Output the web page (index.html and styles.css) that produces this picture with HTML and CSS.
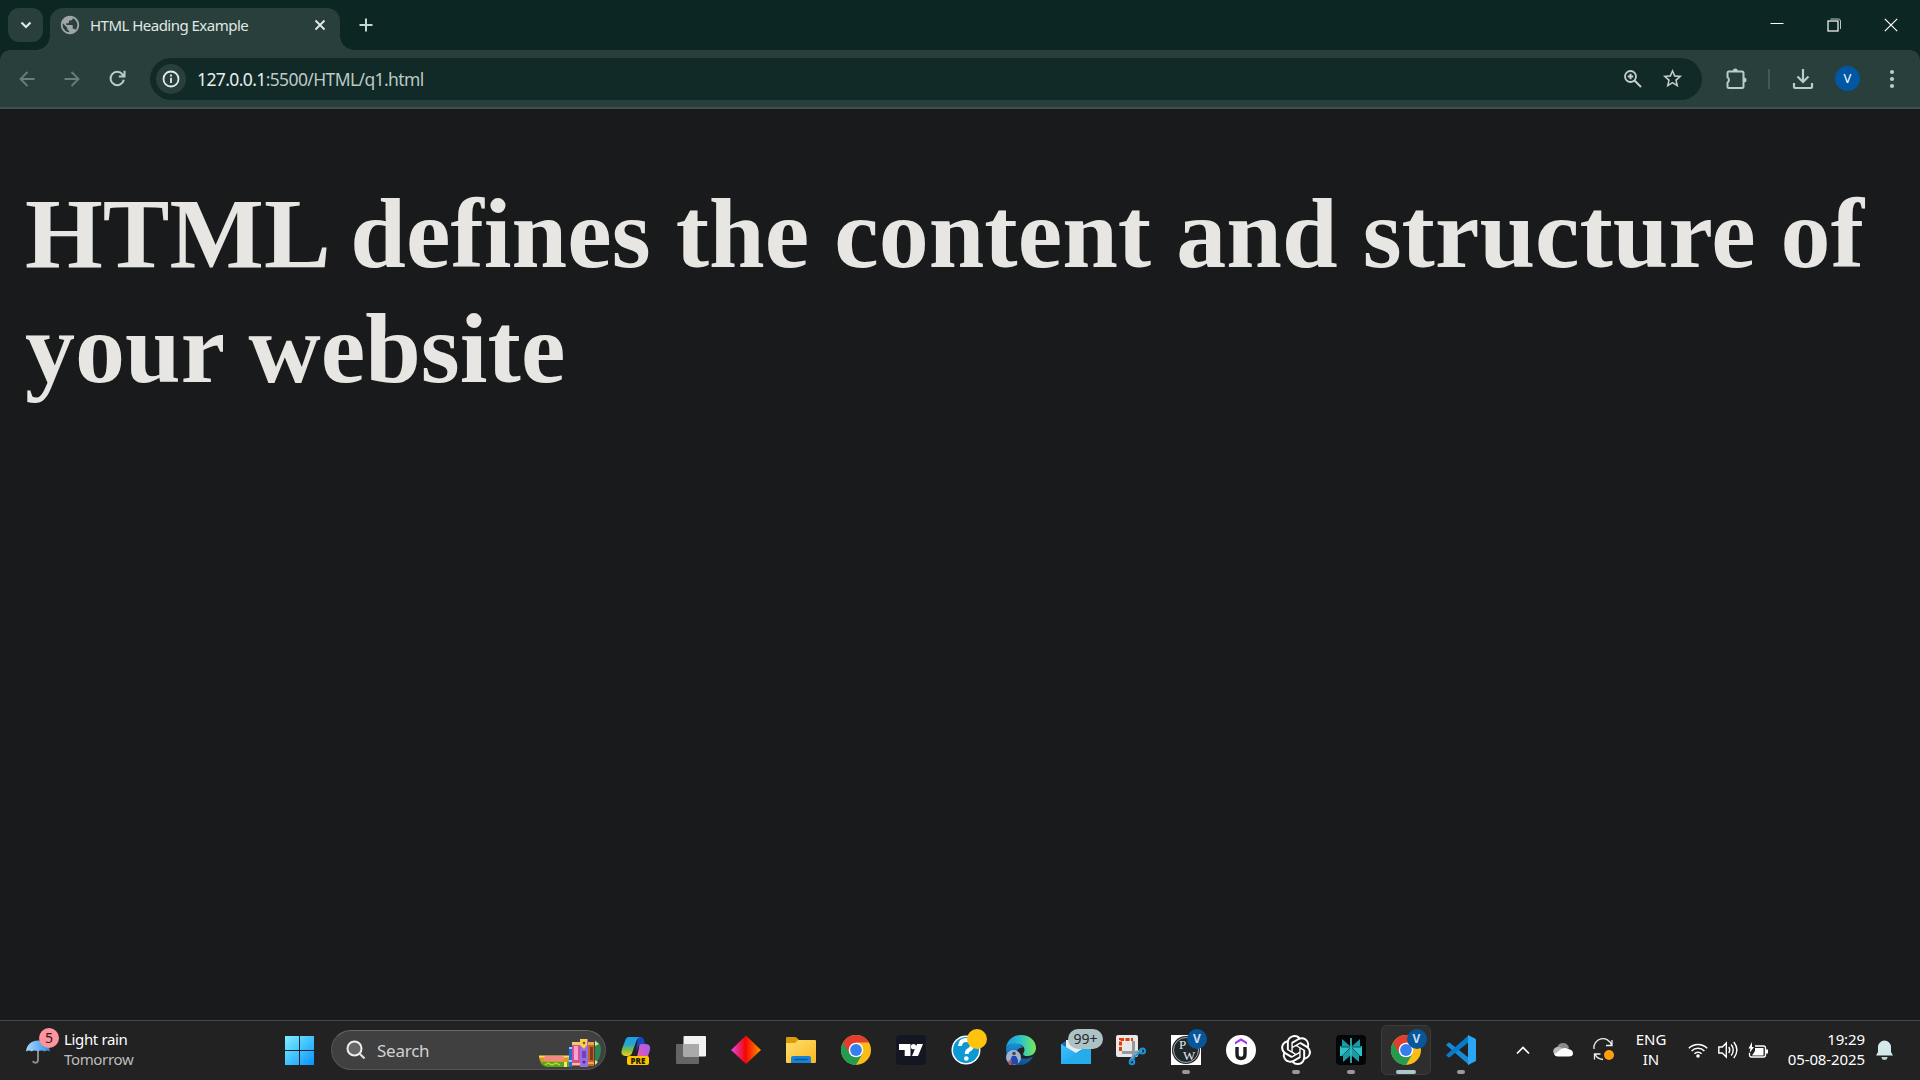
FILE: index.html
```html
<!DOCTYPE html>
<html lang="en">
<head>
<meta charset="utf-8">
<title>HTML Heading Example</title>
<link rel="stylesheet" href="styles.css">
</head>
<body>
<div class="tabstrip">
  <div class="tab-search"><svg width="12" height="8" viewBox="0 0 12 8"><path d="M1.5 1.5 6 6l4.500-4.500" fill="none" stroke="#dfe9e6" stroke-width="2.200"/></svg></div>
  <div class="tab">
    <svg width="22" height="22" viewBox="0 0 24 24"><path fill="#a0a5aa" d="M12 2C6.480 2 2 6.480 2 12s4.480 10 10 10 10-4.480 10-10S17.520 2 12 2zm-1 17.930c-3.950-.490-7-3.850-7-7.930 0-.620.080-1.210.210-1.790L9 15v1c0 1.100.900 2 2 2v1.930zm6.900-2.540c-.260-.810-1-1.390-1.900-1.390h-1v-3c0-.550-.450-1-1-1H8v-2h2c.550 0 1-.450 1-1V7h2c1.100 0 2-.900 2-2v-.410c2.930 1.190 5 4.060 5 7.410 0 2.080-.800 3.970-2.100 5.390z"/></svg>
    <span class="tab-title">HTML Heading Example</span>
    <svg width="12" height="12" viewBox="0 0 12 12"><path d="m1.500 1.500 9 9m0-9-9 9" stroke="#e3ebe8" stroke-width="1.800"/></svg>
  </div>
  <svg class="new-tab" width="14" height="14" viewBox="0 0 14 14"><path d="M7 .5v13M.5 7h13" stroke="#c3d8d3" stroke-width="2"/></svg>
  <div class="window-controls">
    <svg width="14" height="14" viewBox="0 0 14 14"><path d="M.5 5.500h13" stroke="#fff"/></svg>
    <svg width="14" height="14" viewBox="0 0 14 14"><path d="M3.500 1h8a2 2 0 0 1 2 2v8" fill="none" stroke="#b9c5c2"/><rect x="1" y="3" width="10" height="10" fill="none" stroke="#fff" stroke-width="1.200"/></svg>
    <svg width="14" height="14" viewBox="0 0 14 14"><path d="m.8.8 12.400 12.400m0-12.400L.8 13.200" stroke="#fff" stroke-width="1.200"/></svg>
  </div>
</div>
<div class="toolbar">
  <div class="nav">
    <svg width="16" height="16" viewBox="0 0 16 16"><path d="M15.500 8H1.500M8.500 1 1.500 8l7 7" fill="none" stroke="#6b7f7a" stroke-width="1.800"/></svg>
    <svg width="16" height="16" viewBox="0 0 16 16"><path d="M.5 8h14M7.500 1l7 7-7 7" fill="none" stroke="#6b7f7a" stroke-width="1.800"/></svg>
    <svg width="17" height="17" viewBox="0 0 17 17"><path d="M14.800 9.800A6.700 6.700 0 1 1 13.500 4.300L15 6M15.500.8v5.700H9.800" fill="none" stroke="#b5cfc9" stroke-width="2"/></svg>
  </div>
  <div class="omnibox">
    <div class="site-info"><svg width="18" height="18" viewBox="0 0 18 18"><circle cx="9" cy="9" r="7.500" fill="none" stroke="#e3ebe8" stroke-width="1.800"/><path d="M9 7.800V13M9 4.600v1.900" stroke="#e3ebe8" stroke-width="1.800"/></svg></div>
    <div class="url">127.0.0.1<span class="url-path">:5500/HTML/q1.html</span></div>
    <svg class="zoom-icon" width="18" height="18" viewBox="0 0 18 18"><circle cx="6.500" cy="6.500" r="5.500" fill="none" stroke="#c5cecb" stroke-width="1.800"/><path d="M10.500 10.500 17 17M6.500 3.700v5.600M3.700 6.500h5.600" fill="none" stroke="#c5cecb" stroke-width="2"/></svg>
    <svg width="23" height="23" viewBox="0 0 24 24"><path fill="#c5cecb" d="m22 9.240-7.190-.620L12 2 9.190 8.630 2 9.240l5.460 4.730L5.820 21 12 17.270 18.180 21l-1.630-7.030L22 9.240zM12 15.400l-3.760 2.270 1-4.280-3.320-2.880 4.380-.380L12 6.100l1.710 4.040 4.380.380-3.320 2.880 1 4.280L12 15.400z"/></svg>
  </div>
  <div class="actions">
    <svg width="21" height="22" viewBox="0 0 21 22"><path d="M2.500 3.500H16q1.500 0 1.500 1.500v13.500q0 1.500-1.500 1.500H3q-1.500 0-1.500-1.500v-3.800a3.300 3.300 0 0 0 0-5.400V5q0-1.500 1-1.500Z" fill="none" stroke="#b5cfc9" stroke-width="2"/><path d="M6.800 3a2.500 2.500 0 0 1 5 0ZM18 9.500a2.500 2.500 0 0 1 0 5Z" fill="#b5cfc9"/></svg>
    <i class="separator"></i>
    <svg class="download" width="22" height="22" viewBox="0 0 22 22"><path d="M11 1v12.500M5.500 8.500l5.500 5.500 5.500-5.500M2 15v4q0 1 1 1h16q1 0 1-1v-4" fill="none" stroke="#b5cfc9" stroke-width="2.200"/></svg>
    <span class="avatar">V</span>
    <svg class="more" width="6" height="20" viewBox="0 0 6 20" fill="#b5cfc9"><circle cx="3" cy="3" r="2.100"/><circle cx="3" cy="10" r="2.100"/><circle cx="3" cy="17" r="2.100"/></svg>
  </div>
</div>
<main class="page"><h1>HTML defines the content and structure of your website</h1></main>
<footer class="taskbar">
  <div class="weather">
    <div class="umbrella">
      <svg width="26" height="28" viewBox="0 0 26 28"><defs><linearGradient id="um"><stop stop-color="#a9dcff"/><stop offset="1" stop-color="#2f8de4"/></linearGradient></defs><path d="M13 14v10.500a2.700 2.700 0 0 1-5.200.5" fill="none" stroke="#8a8a8a" stroke-width="2"/><path d="M1 15.500C2 8 7 4.500 13 4.500S24 8 25 15.500q-3-2-5.500 0-3-2-6.500 0-3.500-2-6.500 0-2.500-2-5.500 0Z" fill="url(#um)"/></svg>
      <span class="weather-badge">5</span>
    </div>
    <div class="weather-text"><span>Light rain</span><span class="dim">Tomorrow</span></div>
  </div>
  <svg class="start" width="29" height="29" viewBox="0 0 29 29"><defs><linearGradient id="wn" x1="0" y1="0" x2="29" y2="29" gradientUnits="userSpaceOnUse"><stop stop-color="#7df1ff"/><stop offset="1" stop-color="#0794ff"/></linearGradient></defs><path fill="url(#wn)" d="M0 0h14v14H0zM15 0h14v14H15zM0 15h14v14H0zM15 15h14v14H15z"/></svg>
  <div class="search">
    <svg width="20" height="20" viewBox="0 0 20 20"><circle cx="8.500" cy="8.500" r="7" fill="#666" stroke="#eee" stroke-width="2"/><path d="m13.500 13.500 5 5" stroke="#ddd" stroke-width="2.300"/></svg>
    <span>Search</span>
    <svg class="books" width="64" height="30" viewBox="0 0 64 30">
      <path d="M1 18h30v6H3q-2-2-2-6Z" fill="#d79a27"/><path d="M1 17.500h30v2H1z" fill="#ffd85c"/><rect x="6" y="18" width="20" height="5" rx="2" fill="#f08a83"/><path d="M2 24h29v5H9q-5-1-7-5Z" fill="#5ba51b"/><path d="m7 27 3-2 4 2 4-2 4 2" fill="none" stroke="#a9dc34" stroke-width="1.500"/><path d="M26 24h3v5h-3z" fill="#ffe463"/>
      <path d="M31 9h3v20h-3z" fill="#2468de"/><path d="M31 9h3v2h-3zM31 22h3v2h-3z" fill="#7cd1ff"/>
      <path d="M34 4h8v24h-8z" fill="#d44e9f"/><path d="M36 8h4v14h-4z" fill="#f6a3cc"/><path d="M34 4h8v3h-8zM34 25h8v2h-8z" fill="#f4cb60"/>
      <path d="M42 1h8v28h-8z" fill="#9a6ee0"/><path d="M42 1h7v6l-3 4-4-4z" fill="#ffd04a"/><path d="M44 13h4v7h-4z" fill="#6d45b8"/><circle cx="46" cy="5" r="1.300" fill="#865019"/><circle cx="46" cy="24" r="1.600" fill="#502d9d"/>
      <path d="M50 4h6v24h-6z" fill="#c5672b"/><path d="M52 9h3v13h-3z" fill="#80391c"/><path d="M50 4h6v3h-6zM50 24h6v2h-6z" fill="#f3a652"/>
      <path d="M57 2q6 3 6 10-1 10-6 14Z" fill="#2b8751"/><path d="M57 3l4 3-4 2zM57 22l3 2-3 3z" fill="#f1e18b"/>
    </svg>
  </div>
  <div class="apps">
    <div class="app"><svg width="30" height="30" viewBox="0 0 30 30"><defs><linearGradient id="c1" x2="0" y2="1"><stop stop-color="#1e9bee"/><stop offset=".4" stop-color="#24a9cc"/><stop offset=".7" stop-color="#86bd42"/><stop offset="1" stop-color="#f5cb20"/></linearGradient><linearGradient id="c2" x1="1" x2="0" y2="1"><stop stop-color="#9463f3"/><stop offset=".5" stop-color="#d457c6"/><stop offset="1" stop-color="#ff8552"/></linearGradient></defs><path d="M17 2h3q2 0 3 3l1 4h-4q-2 0-3 3l-2 5z" fill="#1747c5"/><path d="M8 2h11q-3 1-4 5l-4 11q-1 3-4 3H4q-5-1-3-7l3-8q1-4 4-4Z" fill="url(#c1)"/><path d="M20 9h5q5 0 4 6l-3 9q-1 4-4 4h-9q2-1 3-6l2-9q0-4 2-4Z" fill="url(#c2)"/></svg><span class="pre">PRE</span></div>
    <div class="app"><svg width="30" height="30" viewBox="0 0 30 30"><rect y="9" width="23" height="20" rx="1" fill="#656565"/><rect x="7.500" y="1" width="22.500" height="20.500" rx="1" fill="#f2f2f2"/><path d="M7.500 9H23v12.500H7.500z" fill="#aaa"/></svg></div>
    <div class="app"><svg width="30" height="30" viewBox="0 0 30 30"><defs><linearGradient id="di"><stop stop-color="#e646e9"/><stop offset=".48" stop-color="#f10606"/><stop offset=".65" stop-color="#fa3200"/><stop offset="1" stop-color="#fa9b00"/></linearGradient></defs><path d="m15 .5 15 14.500-15 14L0 15z" fill="url(#di)"/></svg></div>
    <div class="app"><svg width="30" height="30" viewBox="0 0 30 30"><defs><linearGradient id="fo" x2="1" y2="1"><stop stop-color="#ffdf6e"/><stop offset="1" stop-color="#f9b920"/></linearGradient></defs><path d="M1 2h8q1 0 2 1l2 2v7H0V3q0-1 1-1Z" fill="#dc9b09"/><path d="M0 8h9l3-3h17q1 0 1 1v21q0 1-1 1H1q-1 0-1-1Z" fill="url(#fo)"/><path d="M5 28v-5q0-2 2-2h16q2 0 2 2v5Z" fill="#1783d5"/><path d="M8.500 24.500h13" stroke="#0c518e" stroke-width="1.300"/></svg></div>
    <div class="app"><svg width="30" height="30" viewBox="0 0 30 30"><g id="chrome"><circle cx="15" cy="15" r="15" fill="#fbbc16"/><path d="M15 15 2 7.500A15 15 0 0 0 15 30l6.500-11.250Z" fill="#249b50"/><path d="M2 7.500a15 15 0 0 1 26 0H15l-6.500 11.250Z" fill="#e33d32"/><circle cx="15" cy="15" r="7.300" fill="#fff"/><circle cx="15" cy="15" r="5.900" fill="#347ef0"/></g></svg></div>
    <div class="app"><svg width="30" height="30" viewBox="0 0 30 30"><rect width="30" height="30" rx="4" fill="#131722"/><path d="M3 9h11.500v12H8.700v-6H3zM21 9h6l-5 12h-6z" fill="#fff"/><circle cx="17.500" cy="11.700" r="2.600" fill="#fff"/></svg></div>
    <div class="app"><svg width="30" height="30" viewBox="0 0 30 30"><circle cx="15" cy="15" r="14.500" fill="#fff"/><circle cx="15" cy="15" r="13" fill="#0c98d5"/><path d="M9 11q.3-6 6.300-6 5.900 0 5.900 5 0 3-3 4.700-2.500 1.300-2.500 4.300" fill="none" stroke="#fff" stroke-width="4"/><circle cx="15.300" cy="23.500" r="2.300" fill="#fff"/></svg><i class="dot"></i></div>
    <div class="app"><svg width="30" height="30" viewBox="0 0 30 30"><defs><linearGradient id="ed" x2="1"><stop stop-color="#199be4"/><stop offset=".5" stop-color="#2fc2c9"/><stop offset="1" stop-color="#77ec55"/></linearGradient><linearGradient id="eb" x2="0" y2="1"><stop stop-color="#1c91d8"/><stop offset="1" stop-color="#0b4e96"/></linearGradient></defs><path d="M0 13C1 5 7 0 15 0c9 0 15 6 15 13 0 5-4 8-8 8-6 0-5-2-4-4 2-4-2-8-7-8Q4 8 0 13Z" fill="url(#ed)"/><path d="M0 13q4-5 10-4.500 5 .5 7 4-6 0-6 5c0 5 7 9 16 4-3 6-8 8.500-13 8.500C6 30 0 24 0 13Z" fill="url(#eb)"/><circle cx="7.500" cy="22.500" r="7.500" fill="#9cb4d3"/><circle cx="8" cy="18.500" r="1.800" fill="#57413a"/><path d="M4 30v-4l2-5h4l2 4v4Z" fill="#2547ad"/><path d="M2 26l4-1-1 5H3z" fill="#a35c55"/></svg></div>
    <div class="app"><svg width="30" height="30" viewBox="0 0 30 30"><defs><linearGradient id="ma" x2="1" y2="1"><stop stop-color="#40c2ff"/><stop offset="1" stop-color="#139bea"/></linearGradient></defs><path d="M0 9 15 0l15 9v10H0z" fill="#176cb6"/><path d="M5 5h22v14H5z" fill="#ededed"/><path d="M0 9v20h30V9L15 18z" fill="url(#ma)"/><path d="m0 29 18-13 12-7v20z" fill="#26ace9"/></svg><span class="count">99+</span></div>
    <div class="app"><svg width="30" height="30" viewBox="0 0 30 30"><rect width="22" height="22" rx="2" fill="#e8e8e8"/><path d="M4.500 16V4.500H17" fill="none" stroke="#df3b0b" stroke-width="3" stroke-dasharray="4 1.500"/><path d="M17.500 6v15l-3 5M6 17.500h14l6-2" fill="none" stroke="#929ba4" stroke-width="3"/><circle cx="26.500" cy="16" r="2.500" fill="none" stroke="#1795dc" stroke-width="2"/><circle cx="16" cy="27" r="2.300" fill="none" stroke="#1795dc" stroke-width="2"/><path d="m17 25 2-4 5-3.500" fill="none" stroke="#1795dc" stroke-width="2"/></svg></div>
    <div class="app open"><svg width="30" height="30" viewBox="0 0 30 30"><path fill="#fff" d="M0 0h30v30H0z"/><circle cx="15" cy="15" r="14" fill="#20272b"/><circle cx="15" cy="15" r="12.500" fill="none" stroke="#a4aaad"/><text class="pw" x="8" y="14" font-size="13">P</text><text class="pw" x="12" y="25" font-size="13">W</text></svg><b class="profile">V</b></div>
    <div class="app"><svg width="30" height="30" viewBox="0 0 30 30"><circle cx="15" cy="15" r="15" fill="#fff"/><path d="m9 9.500 6-3.700 6 3.700V7l-6-3.700L9 7z" fill="#a435f0"/><path d="M11 12v7.500q0 4 4 4t4-4V12" fill="none" stroke="#1c1d1f" stroke-width="3.400"/></svg></div>
    <div class="app open"><svg width="30" height="30" viewBox="0 0 24 24"><path fill="#fff" d="M22.282 9.821a5.985 5.985 0 0 0-.516-4.911 6.046 6.046 0 0 0-6.510-2.900A6.065 6.065 0 0 0 4.981 4.182a5.985 5.985 0 0 0-3.998 2.900 6.046 6.046 0 0 0 .743 7.097 5.980 5.980 0 0 0 .511 4.911 6.051 6.051 0 0 0 6.515 2.900A5.985 5.985 0 0 0 13.260 24a6.056 6.056 0 0 0 5.772-4.206 5.989 5.989 0 0 0 3.998-2.900 6.056 6.056 0 0 0-.748-7.073zm-9.022 12.608a4.476 4.476 0 0 1-2.876-1.041l.142-.080 4.778-2.758a.795.795 0 0 0 .393-.681v-6.737l2.020 1.169a.071.071 0 0 1 .038.052v5.583a4.504 4.504 0 0 1-4.495 4.494zm-9.661-4.125a4.471 4.471 0 0 1-.535-3.014l.142.085 4.783 2.758a.771.771 0 0 0 .781 0l5.843-3.369v2.332a.080.080 0 0 1-.033.062L9.740 19.950a4.499 4.499 0 0 1-6.141-1.646zM2.341 7.896a4.485 4.485 0 0 1 2.366-1.973V11.600a.766.766 0 0 0 .388.677l5.814 3.354-2.020 1.169a.076.076 0 0 1-.071 0l-4.830-2.787A4.504 4.504 0 0 1 2.341 7.872zm16.596 3.856L13.104 8.364 15.119 7.200a.076.076 0 0 1 .071 0l4.830 2.791a4.494 4.494 0 0 1-.677 8.104v-5.677a.790.790 0 0 0-.407-.667zm2.011-3.023-.142-.085-4.774-2.782a.776.776 0 0 0-.785 0L9.409 9.230V6.897a.066.066 0 0 1 .028-.062l4.830-2.787a4.499 4.499 0 0 1 6.680 4.660zM8.307 12.863l-2.020-1.164a.080.080 0 0 1-.038-.057V6.074a4.499 4.499 0 0 1 7.376-3.454l-.142.081L8.704 5.459a.795.795 0 0 0-.393.681zm1.098-2.365 2.602-1.500 2.607 1.500v2.999l-2.597 1.500-2.607-1.500Z"/></svg></div>
    <div class="app open"><svg width="30" height="30" viewBox="0 0 30 30"><rect width="30" height="30" rx="4" fill="#020606"/><path d="M6 4l9 8 9-8v7h2v10h-3v6l-8-7-8 7v-6H4V11h2z" fill="#1c9aa5"/><path d="M15 12H4v9h3zM15 12h11v9h-3z" fill="#2bbfc9"/><path d="M15 3v25M15 12 6 21M15 12l9 9M15 12H5m10 0h10" stroke="#083d43" stroke-width=".8"/><path d="M15 3v25" stroke="#38cdd3" stroke-width="1.500"/></svg></div>
    <div class="app open active"><svg width="30" height="30" viewBox="0 0 30 30"><use href="#chrome"/></svg><b class="profile">V</b></div>
    <div class="app open"><svg width="30" height="30" viewBox="0 0 30 30"><path d="m0 10 2-2q1-.8 2 0l19 15v7z" fill="#168ad5"/><path d="m0 20 2 2q1 .8 2 0L23 7V0z" fill="#087acb"/><path d="m22 0 7 3.400q1 .6 1 1.600v20q0 1-1 1.600L22 30Z" fill="#2aa6f5"/></svg></div>
  </div>
  <div class="tray">
    <svg class="chevron" width="14" height="9" viewBox="0 0 14 9"><path d="m1 7.500 6-6 6 6" fill="none" stroke="#fff" stroke-width="1.700"/></svg>
    <svg class="cloud" width="20" height="14" viewBox="0 0 20 14"><path d="M4 6a6 5.500 0 0 1 12-1l-5 6H4Z" fill="#898989"/><path d="M5 4a4.500 4.500 0 0 1 5 3l-4 5.500H4A4.250 4.250 0 0 1 5 4Z" fill="#bdbdbd"/><path d="M1 11q3-1 6-4 4-3.500 8-1 5 .5 5 4.500 0 3-4 3H5q-3 0-4-2.500Z" fill="#fff"/></svg>
    <svg class="sync" width="22" height="22" viewBox="0 0 22 22"><path d="M1 10A9 9 0 0 1 18.500 6M19 1v5.500h-6M1.500 20.500V15h6M2 15q2 5 8 5.500" fill="none" stroke="#eee" stroke-width="1.300"/><circle cx="16" cy="16" r="5" fill="#ff9d0a"/></svg>
    <div class="language"><span>ENG</span><span>IN</span></div>
    <svg class="wifi" width="20" height="16" viewBox="0 0 20 16"><path d="M.8 6.200a13 13 0 0 1 18.400 0M3.600 9a9 9 0 0 1 12.800 0M6.400 11.800a5 5 0 0 1 7.200 0" fill="none" stroke="#fff" stroke-width="1.500"/><circle cx="10" cy="14" r="1.800" fill="#fff"/></svg>
    <svg class="sound" width="20" height="18" viewBox="0 0 20 18"><path d="M.8 6h3.500l4-4v14l-4-4H.8z" fill="none" stroke="#fff" stroke-width="1.400"/><path d="M10.800 6q2 3 0 6M13.200 3.500q4 5.500 0 11M15.800 1q6.200 8 0 16" fill="none" stroke="#fff" stroke-width="1.400"/></svg>
    <svg class="battery" width="20" height="17" viewBox="0 0 20 17"><path d="M7 4h8.500q2 0 2 2v7q0 2-2 2h-12q-2 0-2-2v-2" fill="none" stroke="#fff" stroke-width="1.300"/><path d="M7 6h8.500v7.500H4L7 9zM18 7.500h2v4h-2zM4 0 .5 6.500h2L1.500 11l4.500-6H4z" fill="#fff"/></svg>
    <div class="clock"><span>19:29</span><span>05-08-2025</span></div>
    <svg class="bell" width="17" height="20" viewBox="0 0 17 20"><path d="M2 7a6.500 6.500 0 0 1 13 0v5l2 3.500H0L2 12z" fill="#d3e9ec"/><path d="M5.500 17h6a3 3 0 0 1-6 0Z" fill="#bdd0d3"/></svg>
  </div>
</footer>
</body>
</html>
```
FILE: styles.css
```css
* { box-sizing: border-box; }
body {
  margin: 0; width: 1920px; height: 1080px; overflow: hidden;
  display: flex; flex-direction: column;
  background: #0b2623; color: #fff;
  font-family: "Noto Sans", "Open Sans", sans-serif; font-size: 15px;
}
svg { display: block; flex: none; overflow: visible; }

.tabstrip { height: 50px; flex: none; display: flex; background: #0b2623; padding-left: 8px; }
.tab-search { width: 35px; height: 34px; margin: 8px 7px 0 0; border-radius: 11px; background: #293f3b; display: flex; align-items: center; justify-content: center; }
.tab { position: relative; width: 290px; height: 42px; margin-top: 8px; padding: 0 14px 8px 9px; border-radius: 13px 13px 0 0; background: #293f3b; display: flex; align-items: center; }
.tab::before, .tab::after { content: ""; position: absolute; bottom: 0; width: 14px; height: 14px; }
.tab::before { left: -14px; background: radial-gradient(circle at 0 0, transparent 13.5px, #293f3b 14px); }
.tab::after { right: -14px; background: radial-gradient(circle at 100% 0, transparent 13.5px, #293f3b 14px); }
.tab-title { flex: 1; margin-left: 9px; color: #e0e8e5; letter-spacing: -0.52px; white-space: nowrap; }
.new-tab { margin: 18px 0 0 19px; }
.window-controls { margin: 18px 22px 0 auto; display: flex; gap: 43px; }

.toolbar { height: 59px; flex: none; display: flex; align-items: center; background: #293f3b; border-bottom: 2px solid #414f4c; border-radius: 10px 10px 0 0; padding-left: 19px; }
.nav { width: 131px; display: flex; align-items: center; gap: 29px; }
.omnibox { width: 1552px; height: 42px; border-radius: 21px; background: #112a27; display: flex; align-items: center; padding: 0 18px 0 6px; }
.site-info { width: 30px; height: 30px; border-radius: 50%; background: #293f3b; display: flex; align-items: center; justify-content: center; }
.url { flex: 1; margin-left: 11px; font-size: 17.5px; letter-spacing: -0.61px; color: #e8efed; }
.url-path { color: #bcc9c6; }
.zoom-icon { margin-right: 19px; }
.actions { margin-left: 24px; display: flex; align-items: center; }
.separator { width: 2px; height: 20px; margin-left: 21px; background: #425954; }
.download { margin-left: 22px; }
.avatar { width: 25px; height: 25px; margin-left: 21px; border-radius: 50%; background: #0057a3; font-size: 13px; line-height: 25px; text-align: center; }
.more { margin-left: 29px; }

.page { flex: 1; padding: 0 20px 0 25px; background: #181a1b; }
.page h1 { margin: 0; padding-top: 67px; color: #e8e6e3; font: bold 100px/115px "Liberation Serif", serif; letter-spacing: 0.05px; }

.taskbar { height: 60px; flex: none; display: flex; align-items: center; background: #222; border-top: 1px solid #464646; padding-bottom: 1px; }
.weather { width: 285px; padding-left: 25px; display: flex; align-items: center; }
.umbrella { position: relative; width: 39px; }
.weather-badge { position: absolute; left: 14px; top: -8px; width: 20px; height: 20px; border-radius: 50%; background: #ff949d; color: #241b1c; font-size: 14px; line-height: 20px; text-align: center; }
.weather-text, .language, .clock { display: flex; flex-direction: column; line-height: 20px; white-space: nowrap; padding-bottom: 2px; }
.weather-text { letter-spacing: -0.35px; }
.dim { color: #bdbdbd; }
.start { margin-right: 17px; }
.search { width: 275px; height: 40px; border-radius: 20px; background: #404040; border: 1px solid #555; border-top-color: #686868; display: flex; align-items: center; padding: 0 3px 0 14px; font-size: 17px; color: #d2d2d2; }
.search span { margin-left: 11px; letter-spacing: -0.25px; }
.books { margin-left: auto; margin-top: 6px; }
.apps { margin-left: 2px; display: flex; }
.app { position: relative; width: 55px; height: 50px; display: grid; place-items: center; }
.open::after { content: ""; position: absolute; left: 23.500px; bottom: 1px; width: 8px; height: 4px; border-radius: 2px; background: #999; }
.active { width: 50px; margin: 0 2.500px; border: 1px solid #3c3c3c; border-radius: 6px; background: #2e2e2e; }
.active::after { left: 14px; bottom: 0; width: 20px; background: #adc7cd; }
.pre { position: absolute; left: 19px; top: 31px; width: 22px; height: 9px; border-radius: 2px; background: #ffc500; color: #231b00; font-size: 8px; font-weight: 900; line-height: 9px; text-align: center; }
.dot { position: absolute; left: 29px; top: 4px; width: 20px; height: 20px; border-radius: 50%; background: #ffc20d; }
.count { position: absolute; left: 20px; top: 4px; width: 35px; height: 20px; border-radius: 10px; background: #aec2c6; color: #20292b; font-size: 14px; line-height: 20px; text-align: center; }
.profile { position: absolute; left: 29px; top: 4px; width: 20px; height: 20px; border-radius: 50%; background: #07559b; color: #cbdcec; font-size: 12px; line-height: 20px; text-align: center; }
.active .profile { left: 25px; top: 3px; }
.pw { fill: #e5e8e9; font-family: "Liberation Serif", serif; }
.tray { flex: 1; display: flex; align-items: center; padding-right: 27px; }
.chevron { margin-left: 28px; }
.cloud { margin-left: 23px; }
.sync { margin-left: 20px; }
.language { width: 54px; margin-left: 9px; text-align: center; }
.wifi { margin-left: 10px; }
.sound, .battery { margin-left: 10px; }
.clock { margin-left: auto; text-align: right; letter-spacing: -0.1px; }
.bell { margin-left: 11px; }
```
